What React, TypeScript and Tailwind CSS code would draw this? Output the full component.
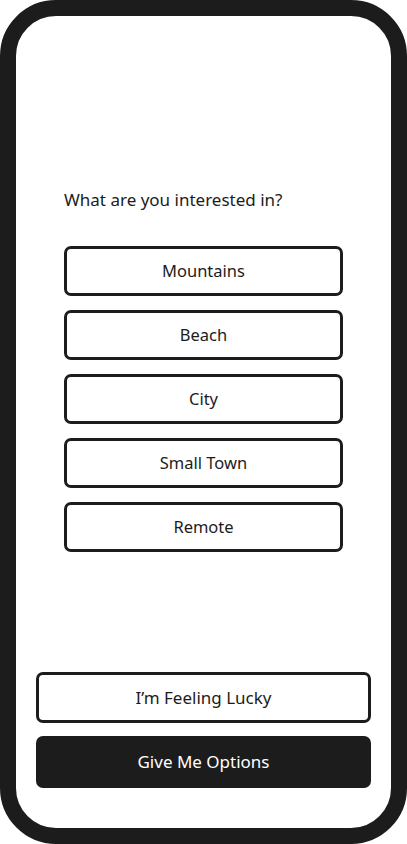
const options = ["Mountains", "Beach", "City", "Small Town", "Remote"];

export default function App() {
  return (
    <div
      className="h-[844px] w-full bg-white text-[#1c1c1c]"
      style={{ fontFamily: '"Noto Sans", "Liberation Sans", sans-serif' }}
    >
      <div className="flex h-full flex-col rounded-[56px] border-[16px] border-[#1c1c1c] bg-white">
        {/* Question */}
        <div className="px-12 pt-[170px]">
          <h1 className="h-[28px] text-[17px] leading-[28px]">What are you interested in?</h1>
          <div className="mt-[32px] flex flex-col gap-[14px]">
            {options.map((o) => (
              <button
                key={o}
                type="button"
                className="flex h-[50px] w-full items-center justify-center rounded-[7px] border-[3px] border-[#1c1c1c] bg-white text-[16.5px]"
              >
                {o}
              </button>
            ))}
          </div>
        </div>

        <div className="flex-1" />

        {/* Actions */}
        <div className="flex flex-col gap-[13px] px-5 pb-[40px]">
          <button
            type="button"
            className="flex h-[51px] w-full items-center justify-center rounded-[7px] border-[3px] border-[#1c1c1c] bg-white text-[17px]"
          >
            I’m Feeling Lucky
          </button>
          <button
            type="button"
            className="flex h-[52px] w-full items-center justify-center rounded-[7px] bg-[#1c1c1c] text-[17px] text-white"
          >
            Give Me Options
          </button>
        </div>
      </div>
    </div>
  );
}
